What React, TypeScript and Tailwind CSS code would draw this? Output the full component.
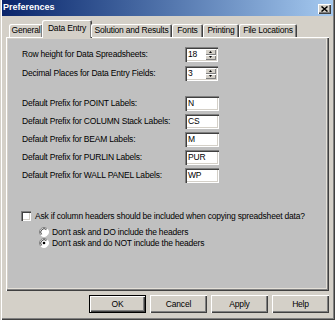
import React from 'react';

// classic win2k dialog, scaled down
const raised =
  'bg-[#d4d0c8] shadow-[inset_1px_1px_0_#ffffff,inset_-1px_-1px_0_#404040,inset_-2px_-2px_0_#808080]';
const sunken =
  'bg-white shadow-[inset_1px_1px_0_#808080,inset_2px_2px_0_#404040,inset_-1px_-1px_0_#ffffff,inset_-2px_-2px_0_#d4d0c8]';

const Arrow: React.FC<{ up?: boolean }> = ({ up }) => (
  <div className="flex-1 flex items-center justify-center bg-[#d4d0c8] shadow-[inset_1px_1px_0_#ffffff,inset_-1px_-1px_0_#808080]">
    <svg width="3" height="2" viewBox="0 0 3 2">
      <polygon points={up ? '1.5,0 3,2 0,2' : '0,0 3,0 1.5,2'} fill="#000" />
    </svg>
  </div>
);

const SpinBox: React.FC<{ value: string }> = ({ value }) => (
  <div className={`flex w-[33px] h-[15px] p-[2px] ${sunken}`}>
    <span className="flex-1 leading-[11px] pl-[1px]">{value}</span>
    <div className="flex flex-col w-[11px]">
      <Arrow up />
      <Arrow />
    </div>
  </div>
);

const TextBox: React.FC<{ value: string }> = ({ value }) => (
  <div className={`w-[34px] h-[15px] px-[3px] leading-[15px] ${sunken}`}>{value}</div>
);

const Radio: React.FC<{ checked?: boolean }> = ({ checked }) => (
  <svg width="10" height="10" viewBox="0 0 10 10" className="shrink-0">
    <circle cx="5" cy="5" r="4.5" fill="#ffffff" />
    <path d="M1.8 8.2 A4.5 4.5 0 0 1 8.2 1.8" fill="none" stroke="#808080" strokeWidth="1" />
    <path d="M2.6 7.4 A3.4 3.4 0 0 1 7.4 2.6" fill="none" stroke="#404040" strokeWidth="1" />
    <path d="M8.2 1.8 A4.5 4.5 0 0 1 1.8 8.2" fill="none" stroke="#ffffff" strokeWidth="1" />
    {checked && <circle cx="5" cy="5" r="1.3" fill="#000" />}
  </svg>
);

const tabs = [
  { name: 'General', w: 'w-[34px]' },
  { name: 'Data Entry', w: 'w-[50px]', active: true },
  { name: 'Solution and Results', w: 'w-[81px]' },
  { name: 'Fonts', w: 'w-[31px]' },
  { name: 'Printing', w: 'w-[36px]' },
  { name: 'File Locations', w: 'w-[58px]' },
];

const prefixes = [
  { label: 'Default Prefix for POINT Labels:', value: 'N' },
  { label: 'Default Prefix for COLUMN Stack Labels:', value: 'CS' },
  { label: 'Default Prefix for BEAM Labels:', value: 'M' },
  { label: 'Default Prefix for PURLIN Labels:', value: 'PUR' },
  { label: 'Default Prefix for WALL PANEL Labels:', value: 'WP' },
];

const buttons = ['OK', 'Cancel', 'Apply', 'Help'];

export default function App() {
  return (
    <div className="w-[335px] h-[320px] bg-[#d4d0c8] flex flex-col font-['Liberation_Sans',Arial,sans-serif] text-[8.5px] tracking-[-0.2px] text-black shadow-[inset_1px_0_0_#d4d0c8,inset_2px_0_0_#ffffff,inset_-1px_-1px_0_#404040,inset_-2px_-2px_0_#808080] overflow-hidden">
      {/* Title bar */}
      <div className="mx-[2px] h-[16px] flex items-center justify-between bg-linear-to-r from-[#0a246a] to-[#a6caf0]">
        <span className="pl-[1px] text-white font-bold text-[9px] tracking-normal">Preferences</span>
        <div className={`mr-[2px] mt-[1px] w-[13px] h-[10px] flex items-center justify-center ${raised}`}>
          <svg width="7" height="6" viewBox="0 0 7 6">
            <path d="M0.5 0.5 L6.5 5.5 M6.5 0.5 L0.5 5.5" stroke="#000" strokeWidth="1.5" />
          </svg>
        </div>
      </div>

      {/* Tabs */}
      <div className="mt-[4px] ml-[9px] h-[17px] flex items-end relative z-10">
        {tabs.map((t) => (
          <div
            key={t.name}
            className={`${t.w} flex items-center justify-center whitespace-nowrap rounded-t-[2px] bg-[#d4d0c8] shadow-[inset_1px_1px_0_#ffffff,inset_-1px_0_0_#404040,inset_-2px_0_0_#808080] ${
              t.active ? 'h-[18px] -mb-[1px] pb-[2px] -mx-[1px] px-[1px]' : 'h-[13px]'
            }`}
          >
            {t.name}
          </div>
        ))}
      </div>

      {/* Tab panel */}
      <div className="ml-[6px] w-[323px] h-[254px] p-[2px] bg-[#d4d0c8] shadow-[inset_1px_1px_0_#ffffff,inset_-1px_-1px_0_#404040,inset_-2px_-2px_0_#808080]">
        <div className="h-full bg-[#c0c0c0] border-b border-r border-[#e4e0d8] pt-[8px] pl-[14px] flex flex-col">
          <div className="flex items-center h-[15px]">
            <span className="w-[163px]">Row height for Data Spreadsheets:</span>
            <SpinBox value="18" />
          </div>
          <div className="flex items-center h-[15px] mt-[4px]">
            <span className="w-[163px]">Decimal Places for Data Entry Fields:</span>
            <SpinBox value="3" />
          </div>

          <div className="flex flex-col gap-[3px] mt-[15px]">
            {prefixes.map((p) => (
              <div key={p.label} className="flex items-center h-[15px]">
                <span className="w-[163px]">{p.label}</span>
                <TextBox value={p.value} />
              </div>
            ))}
          </div>

          <div className="flex items-center h-[10px] mt-[28px] -ml-[1px]">
            <div className={`w-[10px] h-[10px] ${sunken}`} />
            <span className="ml-[4px]">Ask if column headers should be included when copying spreadsheet data?</span>
          </div>
          <div className="flex items-center h-[10px] mt-[6px] ml-[17px]">
            <Radio />
            <span className="ml-[3px]">Don't ask and DO include the headers</span>
          </div>
          <div className="flex items-center h-[10px] mt-[1px] ml-[17px]">
            <Radio checked />
            <span className="ml-[3px]">Don't ask and do NOT include the headers</span>
          </div>
        </div>
      </div>

      {/* Buttons */}
      <div className="mt-[4px] pr-[6px] flex justify-end gap-[4px]">
        {buttons.map((b) => (
          <div
            key={b}
            className={`w-[57px] h-[18px] flex items-center justify-center ${
              b === 'OK'
                ? 'bg-[#d4d0c8] shadow-[inset_0_0_0_1px_#000000,inset_2px_2px_0_#ffffff,inset_-2px_-2px_0_#404040,inset_-3px_-3px_0_#808080]'
                : raised
            }`}
          >
            {b}
          </div>
        ))}
      </div>
    </div>
  );
}
